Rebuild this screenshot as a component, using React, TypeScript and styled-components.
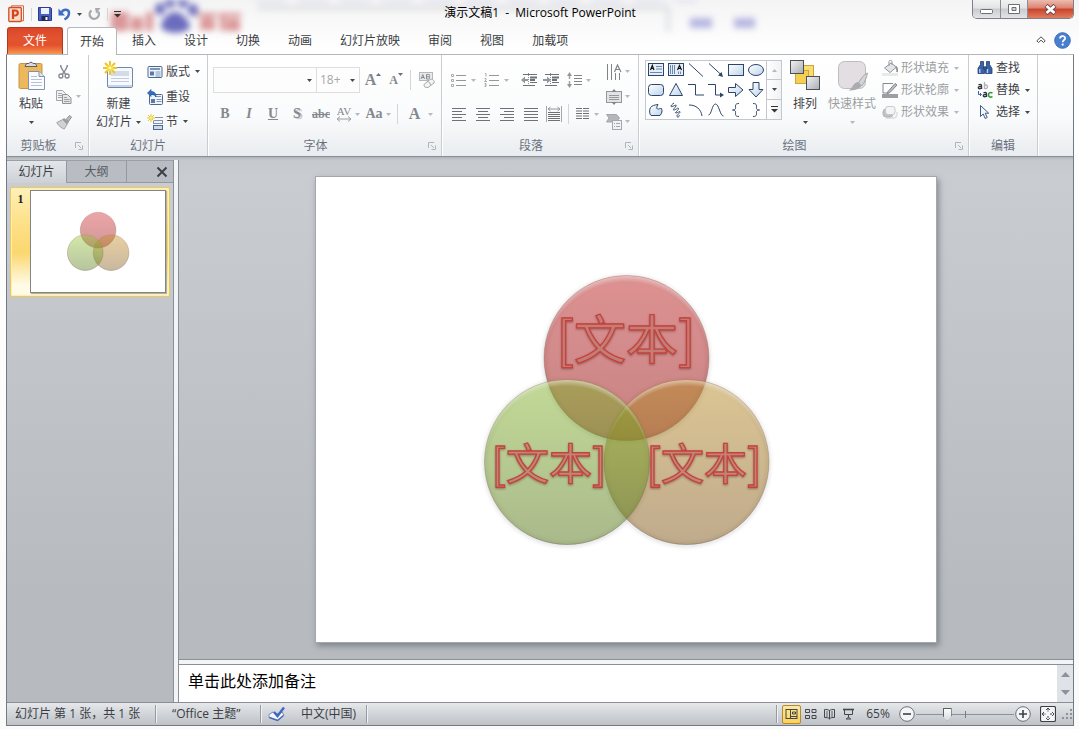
import React from "react";
import styled, { createGlobalStyle, css } from "styled-components";

const GlobalStyle = createGlobalStyle`
  *, *::before, *::after { box-sizing: border-box; }
  html, body { margin: 0; padding: 0; }
  body {
    font-family: "Open Sans", "Noto Sans CJK SC", sans-serif;
    font-size: 12px;
    line-height: 18px;
    color: #3c4046;
    background: #fbfbfb;
  }
  button, input, select, textarea { font: inherit; color: inherit; }
  button {
    margin: 0; padding: 0; border: 0; background: none;
    white-space: nowrap;
  }
  svg { display: block; flex: none; }
`;

/* ---------- window ---------- */

const Window = styled.div`
  min-height: 100vh;
  padding: 0 5px 3px 6px;
  display: flex;
  flex-direction: column;
  background: linear-gradient(#f4f4f5, #ffffff 50px, #fbfafa);
`;

const TitleBar = styled.header`
  position: relative;
  height: 27px;
  display: grid;
  grid-template-columns: 1fr auto 1fr;
  align-items: start;
`;

const GlassBackdrop = styled.svg`
  position: absolute;
  left: 100px;
  top: 0;
  filter: blur(3px);
`;

const QuickAccess = styled.div`
  position: relative;
  height: 28px;
  display: flex;
  align-items: center;
  gap: 6px;
  padding-left: 2px;
`;

const Title = styled.h1`
  position: relative;
  margin: 0;
  padding-top: 4px;
  font-size: 12px;
  font-weight: 400;
  color: #000;
  white-space: pre;
`;

const WindowControls = styled.div`
  position: relative;
  justify-self: end;
  display: flex;
  height: 19px;
  border: 1px solid #7d8086;
  border-top: 0;
  border-radius: 0 0 5px 5px;
  overflow: hidden;
`;

const ControlButton = styled.button<{ $close?: boolean }>`
  width: ${(p) => (p.$close ? 46 : 27)}px;
  display: flex;
  align-items: center;
  justify-content: center;
  background: ${(p) =>
    p.$close
      ? "linear-gradient(#ecbcb0, #dd8270 45%, #c8432b 50%, #e07c5f)"
      : "linear-gradient(#f2f2f3, #e2e3e5 45%, #c9cbcf 50%, #e3e4e7)"};
  & + & { border-left: 1px solid #8b8e94; }
`;

const TabRow = styled.nav`
  height: 27px;
  display: flex;
  align-items: flex-start;
  padding-left: 1px;
`;

const FileTab = styled.button`
  width: 56px;
  height: 27px;
  margin-right: 5px;
  border: 1px solid #b23a1c;
  border-bottom: 0;
  border-radius: 3px 3px 0 0;
  color: #fff;
  background: linear-gradient(#d9472a, #e4532f 40%, #e2502c 65%, #f0763f 85%, #f59a55);
`;

const RibbonTab = styled.button<{ $active?: boolean }>`
  height: 28px;
  padding: 0 12px;
  margin-right: 4px;
  color: #3b3e43;
  position: relative;
  ${(p) =>
    p.$active &&
    css`
      padding: 0 12px;
      border: 1px solid #b4b7bc;
      border-bottom: 0;
      border-radius: 3px 3px 0 0;
      background: #fff;
      margin-right: 3px;
      margin-left: -1px;
    `}
`;

const TabTools = styled.div`
  margin-left: auto;
  height: 26px;
  display: flex;
  align-items: center;
  gap: 8px;
  padding-right: 3px;
`;

const Frame = styled.div`
  flex: 1;
  display: flex;
  flex-direction: column;
  border: 1px solid #747a82;
  border-top-color: #b4b7bc;
`;

/* ---------- ribbon ---------- */

const Ribbon = styled.div`
  height: 102px;
  display: flex;
  border-bottom: 1px solid #8a8f97;
  background: linear-gradient(#ffffff, #fafbfc 60%, #e9ecf0);
`;

const GroupBox = styled.section<{ $width: number }>`
  flex: 0 0 ${(p) => p.$width}px;
  display: flex;
  flex-direction: column;
  border-right: 1px solid #c9ccd1;
  box-shadow: 1px 0 0 #ffffff;
`;

const GroupBody = styled.div<{ $left: number }>`
  flex: 1;
  display: flex;
  align-items: flex-start;
  padding-left: ${(p) => p.$left}px;
`;

const GroupFooter = styled.div`
  height: 20px;
  display: flex;
  align-items: center;
`;

const GroupLabel = styled.h2`
  flex: 1;
  margin: 0;
  font-size: 12px;
  font-weight: 400;
  text-align: center;
  color: #69717d;
`;

const Launcher = styled.button`
  width: 18px;
  display: flex;
  justify-content: center;
  color: #b0b4ba;
`;

const BigButton = styled.button<{ $width: number; $dim?: boolean }>`
  width: ${(p) => p.$width}px;
  padding-top: 4px;
  display: flex;
  flex-direction: column;
  align-items: center;
  color: ${(p) => (p.$dim ? "#9b9ea3" : "#3c4046")};
  & > svg:first-child { margin-bottom: 4px; }
`;

const BigLine = styled.span`
  height: 18px;
  display: flex;
  align-items: center;
  gap: 4px;
`;

const Stack = styled.div<{ $pitch: 22 | 25; $left?: number }>`
  display: flex;
  flex-direction: column;
  padding-top: ${(p) => (p.$pitch === 25 ? 4 : 2)}px;
  margin-left: ${(p) => p.$left ?? 4}px;
  & > button { height: ${(p) => p.$pitch}px; }
`;

const RowButton = styled.button<{ $dim?: boolean; $gap?: number }>`
  display: flex;
  align-items: center;
  gap: ${(p) => p.$gap ?? 3}px;
  color: ${(p) => (p.$dim ? "#9b9ea3" : "#3c4046")};
  & > span + svg { margin-left: 2px; }
`;

const ToolRows = styled.div`
  display: flex;
  flex-direction: column;
  gap: 8px;
  padding-top: 12px;
`;

const ToolRow = styled.div`
  height: 26px;
  display: flex;
  align-items: center;
`;

const ToolButton = styled.button<{ $width?: number; $gap?: number }>`
  width: ${(p) => p.$width ?? 24}px;
  height: 24px;
  display: flex;
  align-items: center;
  justify-content: center;
  gap: ${(p) => p.$gap ?? 3}px;
  color: #85888d;
`;

const Glyph = styled.span<{ $size?: number; $italic?: boolean; $underline?: boolean; $strike?: boolean; $shadow?: boolean }>`
  font-family: "Liberation Serif", serif;
  font-weight: 700;
  font-size: ${(p) => p.$size ?? 14}px;
  line-height: 18px;
  font-style: ${(p) => (p.$italic ? "italic" : "normal")};
  text-decoration: ${(p) => (p.$underline ? "underline" : p.$strike ? "line-through" : "none")};
  text-shadow: ${(p) => (p.$shadow ? "2px 1px 1px #b9bbbe" : "none")};
`;

const Divider = styled.span<{ $height?: number; $margin?: number }>`
  width: 1px;
  height: ${(p) => p.$height ?? 20}px;
  margin: 0 ${(p) => p.$margin ?? 4}px;
  background: #d3d5d9;
`;

const Combo = styled.label<{ $width: number }>`
  width: ${(p) => p.$width}px;
  height: 26px;
  display: grid;
  align-items: center;
  border: 1px solid #dcdee1;
  background: #fdfdfd;
  & + & { border-left: 0; }
  & > * { grid-area: 1 / 1; }
  & > svg { justify-self: end; margin-right: 4px; pointer-events: none; color: #55585d; }
  & > select {
    appearance: none;
    width: 100%;
    height: 24px;
    padding: 0 3px;
    border: 0;
    outline: 0;
    background: transparent;
    color: #a6a8ab;
  }
`;

const Gallery = styled.div`
  margin: 5px 4px 0 0;
  display: flex;
  height: 60px;
  box-shadow: inset 0 0 0 1px #c4c8ce;
  background: #fff;
`;

const GalleryGrid = styled.div`
  display: grid;
  grid-template-columns: repeat(6, 20px);
  padding-left: 1px;
  & > button {
    height: 20px;
    display: flex;
    align-items: center;
    justify-content: center;
  }
`;

const GalleryScroll = styled.div`
  width: 16px;
  display: flex;
  flex-direction: column;
  & > button {
    height: 20px;
    display: flex;
    align-items: center;
    justify-content: center;
    border: 1px solid #c4c8ce;
    background: linear-gradient(90deg, #ffffff, #f0f2f4);
    color: #55585d;
  }
  & > button + button { border-top: 0; }
  & > button:first-child { color: #b4b7bb; }
`;

/* ---------- workspace ---------- */

const Workspace = styled.div`
  flex: 1;
  display: grid;
  grid-template-columns: 167px 4px minmax(0, 1fr);
  padding-top: 3px;
  background: linear-gradient(#aeb3b9, #c5c9ce 3px, #c9ccd1 20px, #b7bbc0 440px, #b7bbc0);
`;

const Splitter = styled.div`
  background: #f2f4f6;
`;

const SidePanel = styled.aside`
  border-right: 1px solid #8b9097;
`;

const PanelTabs = styled.div`
  height: 23px;
  display: flex;
  border-top: 1px solid #9aa0a7;
`;

const PanelTab = styled.button<{ $active?: boolean }>`
  width: 60px;
  border-right: 1px solid #9399a0;
  ${(p) =>
    p.$active
      ? css`padding-bottom: 1px; background: linear-gradient(#e3e6e9, #cdd1d6); color: #3c4046;`
      : css`background: #b9bdc3; color: #565b62; border-bottom: 1px solid #9399a0;`}
`;

const PanelClose = styled.button`
  flex: 1;
  display: flex;
  align-items: center;
  justify-content: flex-end;
  padding-right: 5px;
  color: #3c4046;
  background: #b9bdc3;
  border-bottom: 1px solid #9399a0;
`;

const SlideThumb = styled.button`
  margin: 4px 4px 0 3px;
  width: 160px;
  padding: 2px 3px 3px 0;
  display: flex;
  align-items: flex-start;
  border: 1px solid #e9c964;
  border-radius: 2px;
  background: linear-gradient(#fff0b8, #fddf85 35%, #fbd76f 60%, #fffbe6 90%);
  box-shadow: inset 0 0 0 1px #fdeeb4;
`;

const ThumbNumber = styled.span`
  width: 19px;
  font-family: "Liberation Serif", serif;
  font-weight: 700;
  text-align: center;
  color: #222;
`;

const ThumbPaper = styled.span`
  flex: 1;
  border: 1px solid #80858c;
  background: #fff;
  box-shadow: 1px 1px 1px #b9b08c;
  & > svg { width: 100%; height: auto; }
`;

const MainColumn = styled.main`
  display: flex;
  flex-direction: column;
  border-left: 1px solid #8b9097;
`;

const SlidePane = styled.div`
  flex: 1;
  padding: 17px 137px 17px 137px;
  border-bottom: 1px solid #8b9097;
`;

const Slide = styled.div`
  aspect-ratio: 4 / 3;
  background: #fff;
  box-shadow: 0 0 0 1px #a4a8ae, 2px 3px 6px 1px rgba(70, 75, 82, 0.5);
  & > svg { width: 100%; height: 100%; }
`;

const HorizontalSplitter = styled.div`
  height: 4px;
  background: #f2f4f6;
`;

const Notes = styled.div`
  height: 38px;
  display: flex;
  border-top: 1px solid #8b9097;
  background: #fff;
`;

const NotesInput = styled.textarea`
  flex: 1;
  min-width: 0;
  padding: 4px 9px;
  border: 0;
  outline: 0;
  resize: none;
  overflow: hidden;
  font-size: 16px;
  line-height: 24px;
  color: #000;
  background: transparent;
`;

const NotesScroll = styled.div`
  width: 16px;
  display: flex;
  flex-direction: column;
  background: #dfe3e8;
  color: #8a929c;
  & > button {
    flex: 1;
    display: flex;
    align-items: center;
    justify-content: center;
  }
`;

/* ---------- status bar ---------- */

const StatusBar = styled.footer`
  height: 23px;
  display: flex;
  align-items: center;
  border-top: 1px solid #8a8f97;
  background: linear-gradient(#e6e8ea, #d3d6da 45%, #bec2c7);
  color: #3a3e44;
`;

const StatusItem = styled.button<{ $width: number; $left: number }>`
  width: ${(p) => p.$width}px;
  height: 20px;
  display: flex;
  align-items: center;
  padding-left: ${(p) => p.$left}px;
`;

const StatusDivider = styled.span`
  width: 2px;
  height: 18px;
  border-left: 1px solid #969ba2;
  border-right: 1px solid #f0f1f3;
`;

const StatusRight = styled.div`
  margin-left: auto;
  height: 22px;
  display: flex;
  align-items: center;
`;

const ViewButton = styled.button<{ $active?: boolean }>`
  width: 19px;
  height: 19px;
  display: flex;
  align-items: center;
  justify-content: center;
  color: #43474d;
  ${(p) =>
    p.$active &&
    css`
      margin-left: 4px;
      border: 1px solid #b5892c;
      border-radius: 2px;
      background: linear-gradient(#fde9a0, #fbd159);
    `}
`;

const FitButton = styled(ViewButton)`
  margin: 0 5px 0 6px;
`;

const ZoomValue = styled.button`
  width: 40px;
  height: 20px;
  text-align: center;
`;

const ZoomSlider = styled.input`
  appearance: none;
  width: 98px;
  height: 16px;
  margin: 0;
  background:
    linear-gradient(#767b82, #767b82) 49px 50% / 1px 7px no-repeat,
    linear-gradient(#8d9299, #8d9299) 0 50% / 100% 1px no-repeat;
  &::-webkit-slider-thumb {
    appearance: none;
    width: 9px;
    height: 13px;
    border: 0;
    background: linear-gradient(#ffffff, #d5d8dc);
    clip-path: polygon(0 0, 100% 0, 100% 65%, 50% 100%, 0 65%);
    box-shadow: inset 0 0 0 1px #5b6067;
  }
`;

const ZoomStep = styled.button`
  width: 18px;
  height: 20px;
  display: flex;
  align-items: center;
  justify-content: center;
`;

/* ---------- icons ---------- */

const Caret = ({ dim }: { dim?: boolean }) => (
  <svg width="5" height="3" viewBox="0 0 5 3">
    <path d="M0 0h5L2.500 3z" fill={dim ? "#b5b8bc" : "#45484d"} />
  </svg>
);

const LauncherIcon = () => (
  <svg width="8" height="8" viewBox="0 0 8 8" fill="none" stroke="currentColor">
    <path d="M.5 6V.5H6M3 3l3 3M7.500 3.500v4h-4" />
  </svg>
);

const AppIcon = () => (
  <svg width="17" height="18" viewBox="0 0 17 18">
    <path d="M3.500.8h12v15h-12z" fill="#fdf1ea" stroke="#d76a44" />
    <rect x=".8" y="2.500" width="12.500" height="14" rx="1" fill="#fbdccb" stroke="#cf4f26" strokeWidth="1.300" />
    <path d="M5 14V5.500h2.300a2.400 2.400 0 0 1 0 5H5.500" fill="none" stroke="#d6431a" strokeWidth="2.200" />
  </svg>
);

const SaveIcon = () => (
  <svg width="14" height="14" viewBox="0 0 14 14">
    <path d="M.5.5h12l1 1v12H.5z" fill="#4a5fc1" stroke="#2c3a8f" />
    <rect x="3" y="1" width="8" height="6" fill="#eef2fb" />
    <rect x="3.500" y="9" width="7" height="5" fill="#1e2861" />
    <rect x="7.500" y="10" width="2" height="3" fill="#fff" />
  </svg>
);

const UndoIcon = () => (
  <svg width="13" height="14" viewBox="0 0 13 14" fill="none">
    <path d="M3.500 5.500c2-4 7.500-3.500 7.500.5 0 3-2 5-4.500 6.500" stroke="#3d6cc6" strokeWidth="2.500" />
    <path d="M.5 1.500v7h6.500z" fill="#3d6cc6" />
  </svg>
);

const RedoIcon = () => (
  <svg width="13" height="14" viewBox="0 0 13 14" fill="none">
    <path d="M3.500 3.500a4.600 4.600 0 1 0 6.500 1" stroke="#a6a9ad" strokeWidth="2.400" />
    <path d="M7 1h5.500L8 6.500z" fill="#a6a9ad" />
  </svg>
);

const CustomizeIcon = () => (
  <svg width="7" height="7" viewBox="0 0 7 7">
    <path d="M0 .5h7" stroke="#333" />
    <path d="M0 3h7L3.500 6.500z" fill="#333" />
  </svg>
);

const PasteIcon = () => (
  <svg width="32" height="32" viewBox="0 0 32 32">
    <rect x="4" y="4.500" width="23" height="25" rx="1.500" fill="#edb85c" stroke="#c39443" />
    <path d="M10 7.500h12l-1.500-3h-2.500a2.200 2.200 0 0 0-4 0h-2.500z" fill="#d8dadd" stroke="#5d6168" />
    <path d="M13.500 12.500h10.500l5.500 5v13h-16z" fill="#fafcff" stroke="#8492ad" />
    <path d="M24 12.500v5h5.500" fill="#dfe6f1" stroke="#8492ad" />
    <path d="M16 17.500h6M16 20.500h11M16 23.500h11M16 26.500h11" stroke="#b5c0d4" />
  </svg>
);

const CutIcon = () => (
  <svg width="16" height="16" viewBox="0 0 16 16" fill="none" stroke="#85888d">
    <path d="M4.500 1c.5 3 2.500 6 5 9M11.500 1c-.5 3-2.500 6-5 9" strokeWidth="1.500" />
    <circle cx="4.900" cy="12" r="2" strokeWidth="1.300" />
    <circle cx="11.100" cy="12" r="2" strokeWidth="1.300" />
  </svg>
);

const CopyIcon = () => (
  <svg width="16" height="16" viewBox="0 0 16 16" stroke="#a2a5aa" fill="#f1f2f3">
    <path d="M.5 1.500h6l3 3v7h-9z" />
    <path d="M2 4.500h4M2 6.500h5M2 8.500h5" />
    <path d="M6.500 5.500h5l3.500 3.500v5.500H6.500z" fill="#e6e7e9" stroke="#8f9297" />
    <path d="M8 8.500h3M8 10.500h5.500M8 12.500h5.500" stroke="#9b9ea3" />
  </svg>
);

const BrushIcon = () => (
  <svg width="16" height="16" viewBox="0 0 16 16">
    <path d="M.8 8.500l6-3 4.500 4.500-3 5c-2-.5-6-3-7.500-6.500z" fill="#cfd1d4" stroke="#a2a5aa" />
    <path d="M6.500 5.500L8 4l5 4-2 2.500z" fill="#9a9da2" />
    <path d="M10 5.500l3.500-4 2 1.500-3 4.500z" fill="#b9bbbf" stroke="#8f9297" />
  </svg>
);

const Spark = ({ x, y, r }: { x: number; y: number; r: number }) => {
  const d = Math.round(r * 0.75);
  return (
    <g transform={`translate(${x} ${y})`} stroke="#ecc62a" strokeWidth={r > 5 ? 2 : 1}>
      <path d={`M0 ${-r}V${r}M${-r} 0H${r}M${-d} ${-d}L${d} ${d}M${-d} ${d}L${d} ${-d}`} />
      <circle r={r / 3} fill="#fffbd0" stroke="#f7dc4a" />
    </g>
  );
};

const NewSlideIcon = () => (
  <svg width="32" height="32" viewBox="0 0 32 32">
    <rect x="4.500" y="8.500" width="25" height="20" rx="1.500" fill="#f6f9fd" stroke="#7387a8" />
    <path d="M5 26h24v2H5z" fill="#c3d3e8" />
    <rect x="8" y="12" width="18" height="5" fill="#d3dbe7" />
    <path d="M8 19.500h18M8 22.500h18" stroke="#c3ccda" />
    <Spark x={7} y={9} r={7} />
  </svg>
);

const LayoutIcon = () => (
  <svg width="16" height="16" viewBox="0 0 16 16">
    <rect x="1" y="2.500" width="14" height="11" rx="1" fill="#eef4fb" stroke="#4f688f" />
    <path d="M3 5h10" stroke="#7e95b8" strokeWidth="2" />
    <rect x="3" y="7.500" width="4" height="4" fill="#5c7aa8" />
    <path d="M8.500 8h5M8.500 10h5M8.500 12h5" stroke="#8198ba" />
  </svg>
);

const ResetIcon = () => (
  <svg width="16" height="16" viewBox="0 0 16 16">
    <rect x="2.500" y="5.500" width="13" height="10" rx="1" fill="#eef4fb" stroke="#4f688f" />
    <path d="M8 7.500h6" stroke="#7e95b8" />
    <rect x="4" y="10" width="4" height="4" fill="#5c7aa8" />
    <path d="M9.500 10.500h5M9.500 12.500h5" stroke="#8198ba" />
    <path d="M.5 4L4 .5v2c3.500 0 5 1.500 5 5.500-1-2-2.500-2.500-5-2.500v2z" fill="#2f6fc4" stroke="#1f4f94" strokeWidth=".6" />
  </svg>
);

const SectionIcon = () => (
  <svg width="16" height="16" viewBox="0 0 16 16">
    <path d="M8 3.500h8" stroke="#8b9099" />
    <rect x="6.500" y="6.500" width="9" height="3" fill="#eef4fb" stroke="#7e91b1" />
    <rect x="6.500" y="11.500" width="9" height="4" fill="#c9d9ee" stroke="#4f688f" />
    <Spark x={4} y={4} r={4} />
  </svg>
);

const SizeArrow = ({ up }: { up?: boolean }) => (
  <svg width="5" height="16" viewBox="0 0 5 16">
    <path d={up ? "M0 4L2.500 1 5 4z" : "M0 1h5L2.500 4z"} fill="#6e7176" />
  </svg>
);

const ClearIcon = () => (
  <svg width="18" height="18" viewBox="0 0 18 18">
    <rect x="1.500" y="1.500" width="13" height="8" fill="#e9eaec" stroke="#b5b7bb" />
    <path d="M3 8l1.800-4.500L6.500 8M3.800 6.500h2.200M8.500 3.500v4.500h2.200a1.200 1.200 0 0 0 0-2.300H9M8.500 3.500h2.200a1.100 1.100 0 0 1 0 2.200" fill="none" stroke="#7e8186" strokeWidth=".9" />
    <path d="M6 13.500l6-5c2-1 5 1 4 3.500l-6 4.500c-2.500.5-4.500-1-4-3z" fill="#f4f4f5" stroke="#a4a7ab" />
    <path d="M9.500 10.500c2 .5 3 2 3 4" fill="none" stroke="#a4a7ab" />
  </svg>
);

const SpacingIcon = () => (
  <svg width="16" height="6" viewBox="0 0 16 6" fill="none" stroke="#9b9ea3">
    <path d="M1 3h14M4 .5L1 3l3 2.500M12 .5L15 3l-3 2.500" />
  </svg>
);

const SpacingGlyph = styled.span`
  display: flex;
  flex-direction: column;
  align-items: center;
  font-family: "Liberation Serif", serif;
  font-size: 11px;
  line-height: 9px;
`;

const Bullets = ({ numbered }: { numbered?: boolean }) => (
  <svg width="15" height="14" viewBox="0 0 15 14" fill="none" stroke="#94979c">
    <path d="M5 2.500h10M5 7.500h10M5 12.500h10" />
    {numbered ? (
      <path d="M1 .5h1v3M.5 5.500H2v1.500L.5 8.500H3M.5 10.500H2v3H.5M.8 12H2" strokeWidth=".8" />
    ) : (
      <path d="M.5 1.500h2v2h-2zM.5 6.500h2v2h-2zM.5 11.500h2v2h-2z" strokeWidth=".8" />
    )}
  </svg>
);

const IndentIcon = ({ inward }: { inward?: boolean }) => (
  <svg width="16" height="14" viewBox="0 0 16 14" fill="none" stroke="#6e7176">
    <path d="M2 1.500h14M9 9.500h7M2 12.500h12" />
    <path d="M9 4.500h7M9 7h5" strokeWidth="1.800" />
    <path d={inward ? "M0 7h5" : "M2 7h5"} strokeWidth="2" stroke="#94979c" />
    <path d={inward ? "M4 3.500v7L8 7z" : "M4 3.500v7L0 7z"} fill="#94979c" stroke="none" />
    <path d="M7.500 0v14" strokeDasharray="1 1" strokeWidth=".8" />
  </svg>
);

const LineSpacingIcon = () => (
  <svg width="16" height="16" viewBox="0 0 16 16" fill="none" stroke="#808388">
    <path d="M7 3.500h8M7 6.500h8M7 9.500h8M7 12.500h8" />
    <path d="M2.500 2v12" stroke="#a2a5aa" strokeWidth="1.500" strokeDasharray="5 2 5" />
    <path d="M0 4l2.500-4L5 4zM0 12l2.500 4L5 12z" fill="#94979c" stroke="none" />
  </svg>
);

const alignLines = {
  left: "M0 .5h14M0 3.500h10M0 6.500h14M0 9.500h10M0 12.500h14",
  center: "M0 .5h14M2 3.500h10M0 6.500h14M2 9.500h10M0 12.500h14",
  right: "M0 .5h14M4 3.500h10M0 6.500h14M4 9.500h10M0 12.500h14",
  justify: "M0 .5h14M0 3.500h14M0 6.500h14M0 9.500h14M0 12.500h14",
};

const AlignIcon = ({ kind }: { kind: keyof typeof alignLines }) => (
  <svg width="14" height="13" viewBox="0 0 14 13" stroke="#6e7176">
    <path d={alignLines[kind]} />
  </svg>
);

const DistributeIcon = () => (
  <svg width="16" height="16" viewBox="0 0 16 16" fill="none" stroke="#6e7176">
    <path d="M.5 0v16M15.500 0v16" stroke="#a4a7ab" />
    <path d="M2 6.500h12M2 8.500h12M2 10.500h12M2 12.500h12M2 14.500h12" />
    <path d="M2 3h12M4.500 1L2 3l2.500 2M11.500 1L14 3l-2.500 2" stroke="#94979c" />
  </svg>
);

const ColumnsIcon = () => (
  <svg width="13" height="12" viewBox="0 0 13 12" stroke="#6e7176">
    <path d="M0 .5h6M0 3h6M0 5.500h6M0 8h6M0 10.500h6M7 .5h6M7 3h6M7 5.500h6M7 8h6M7 10.500h6" />
  </svg>
);

const TextDirectionIcon = () => (
  <svg width="16" height="16" viewBox="0 0 16 16" fill="none" stroke="#808388">
    <path d="M1.500 0v16M5.500 0v16M9.500 9v7M13.500 9v7" />
    <path d="M8.500 8l3-7 3.500 7M9.500 5.500h4" strokeWidth="1.200" />
  </svg>
);

const TextAlignIcon = () => (
  <svg width="16" height="16" viewBox="0 0 16 16" fill="none" stroke="#94979c">
    <rect x=".5" y="2.500" width="15" height="11" fill="#e4e2e5" />
    <path d="M3 6.500h10M3 8.500h10M3 10.500h10" />
    <path d="M5.500 3L8 0l2.500 3zM5.500 13L8 16l2.500-3z" fill="#808388" stroke="none" />
  </svg>
);

const SmartArtIcon = () => (
  <svg width="16" height="16" viewBox="0 0 16 16" fill="none" stroke="#a4a7ab">
    <path d="M.5.5h10l3 3.500-3 4h-10L3 4z" fill="#b4b6ba" />
    <rect x="6.500" y="6.500" width="9" height="9" fill="#f1f2f3" />
    <path d="M8 9.500h1M10 9.500h4M8 12.500h1M10 12.500h4" />
  </svg>
);

const navy = "#2d4668";

const shapes: { name: string; art: React.ReactNode }[] = [
  { name: "文本框", art: <><rect x=".5" y="1.500" width="15" height="12" fill="#e4edf8" /><path d="M2.500 8l1.800-4.500L6 8M3.200 6.500h2.200" strokeWidth="1.200" stroke="#111" /><path d="M8 4.500h6M8 7h6M2 10.500h12" strokeWidth=".9" stroke="#5e7ba3" /></> },
  { name: "垂直文本框", art: <><rect x=".5" y="1.500" width="15" height="12" fill="#e4edf8" /><path d="M9.500 8l2-4.500 2 4.500M10.200 6.500h2.600" strokeWidth="1.200" stroke="#111" /><path d="M2.500 3v9M4.500 3v9M6.500 3v9M10.500 9.500V12M12.500 9.500V12" strokeWidth=".9" stroke="#5e7ba3" /></> },
  { name: "直线", art: <path d="M1 1.500l14 13" /> },
  { name: "箭头", art: <><path d="M1 1.500l13 12" /><path d="M15 15l-5-1.500L13.500 10z" fill={navy} stroke="none" /></> },
  { name: "矩形", art: <rect x=".5" y="2.500" width="15" height="11" fill="url(#pale)" /> },
  { name: "椭圆", art: <ellipse cx="8" cy="8" rx="7.500" ry="5.500" fill="url(#pale)" /> },
  { name: "圆角矩形", art: <rect x=".5" y="2.500" width="15" height="11" rx="3" fill="url(#pale)" /> },
  { name: "三角形", art: <path d="M8 1.500l6.500 12h-13z" fill="url(#pale)" /> },
  { name: "肘形连接符", art: <path d="M0 2.500h7.500v10.500H16" /> },
  { name: "肘形箭头", art: <><path d="M0 2.500h7.500v10.500H14" /><path d="M12 10.500v5l4-2.500z" fill={navy} stroke="none" /></> },
  { name: "右箭头", art: <path d="M.5 5.500h7v-4L15 8l-7.500 6.500v-4h-7z" fill="url(#pale)" /> },
  { name: "下箭头", art: <path d="M5 .5h6v7h4L8 15 1 7.500h4z" fill="url(#pale)" /> },
  { name: "任意多边形", art: <path d="M3 13.500C1.500 12.500 1 8 2.500 5.500c1.500-2 4-2.500 7.500-3-1 2-2 3.500-.5 4.500 1 .5 2.500-1 4-.5 1 2 .5 5-1.500 7z" fill="url(#pale)" /> },
  { name: "自由曲线", art: <path d="M6 1C3 3 2 5 4 4.500S9 2 8 4 4 8 6 8s4-3 4.500-1.500S6 11 8 11s4-2.500 4-1-4 3-3 4.500 3-.5 2-1.500" /> },
  { name: "弧形", art: <path d="M1 3c7 0 12 4 13 11" /> },
  { name: "曲线", art: <path d="M.5 13c3 0 3.500-11 7-11s4.500 12 8 12" /> },
  { name: "左大括号", art: <path d="M11 1.500c-5 0-3 3-3.500 5-.3 1-1.500 1.500-3 1.500 1.500 0 2.700.5 3 1.500.5 2-1.500 5 3.500 5" /> },
  { name: "右大括号", art: <path d="M5 1.500c5 0 3 3 3.500 5 .3 1 1.500 1.500 3 1.500-1.500 0-2.700.5-3 1.500-.5 2 1.500 5-3.500 5" /> },
];

const ShapeIcon = ({ children }: { children: React.ReactNode }) => (
  <svg width="16" height="16" viewBox="0 0 16 16" fill="none" stroke={navy}>
    {children}
  </svg>
);

const SharedGradients = styled.svg`
  position: absolute;
`;

const ArrangeIcon = () => (
  <svg width="32" height="32" viewBox="0 0 32 32">
    <rect x="11.500" y="6.500" width="13" height="13" fill="#fbdc6c" stroke="#c7a53f" />
    <rect x="6.500" y="11.500" width="13" height="13" fill="#f6cf52" stroke="#c7a53f" />
    <rect x="1.500" y="1.500" width="13" height="13" fill="url(#steel)" stroke="#4b4f56" />
    <rect x="17.500" y="17.500" width="13" height="13" fill="url(#steel)" stroke="#4b4f56" />
  </svg>
);

const QuickStyleIcon = () => (
  <svg width="32" height="32" viewBox="0 0 32 32">
    <rect x="2.500" y="2.500" width="27" height="27" rx="6" fill="#e2dee2" stroke="#bfbcc0" />
    <path d="M31.500 14c-4 2-7 6-9 10l3 3c3-3 5-8 6-13z" fill="#d3d4d6" stroke="#a4a7ab" />
    <path d="M22 23l3.500 3.500c-2 4-7 5-13 5 4-1.500 4-7.500 9.500-8.500z" fill="#a9acb0" />
  </svg>
);

const FillIcon = () => (
  <svg width="16" height="16" viewBox="0 0 16 16" fill="none" stroke="#94979c">
    <path d="M2.500 8L9 3l5.500 4L8 12.500z" fill="#e4e5e7" />
    <path d="M7 6V1.500c0-1.500 3-1.500 3 0V5" />
    <path d="M13.500 6.500c2 1.500 2 3.500 1.500 5.500" strokeWidth="2" />
    <rect x="0" y="13" width="16" height="3" fill="#e9e9ea" stroke="none" />
  </svg>
);

const OutlineIcon = () => (
  <svg width="16" height="16" viewBox="0 0 16 16" fill="none" stroke="#85888d">
    <path d="M11 1.500H1v9.500h6" />
    <path d="M6 9.500l7-8 2 1.500-7 7.500-3 1z" fill="#b9bbbf" />
    <rect x="0" y="12" width="16" height="4" fill="#9b9ea3" stroke="none" />
  </svg>
);

const EffectIcon = () => (
  <svg width="16" height="16" viewBox="0 0 16 16">
    <path d="M4 14h8c3 0 3-4 3-6" stroke="#e2e3e5" strokeWidth="2" fill="none" />
    <rect x="1" y="5" width="10" height="8" rx="3" fill="#bfc1c5" stroke="#b3b5b9" />
    <rect x="3.500" y="2.500" width="9.500" height="8" rx="2.500" fill="#f4f4f5" stroke="#c6c8cb" />
  </svg>
);

const FindIcon = () => (
  <svg width="16" height="16" viewBox="0 0 16 16" fill="#3a62a8" stroke="#1e3c74" strokeWidth=".8">
    <path d="M3.500 1.500h3v4l1 2v6H1v-5l2.500-4z" />
    <path d="M9.500 1.500h3v3l2.500 4v5H8.500v-6l1-2z" />
    <path d="M6.500 7h3v2h-3z" />
    <path d="M2.800 9v4M10.500 9v4" stroke="#b9d0f0" strokeWidth="1.300" />
  </svg>
);

const ReplaceIcon = () => (
  <svg width="16" height="16" viewBox="0 0 16 16" fill="none" strokeWidth="1.400">
    <path d="M1.500 2.800c2.500-1 3 0 3 1.200v3M4.500 4.500c-2-.2-3.200.3-3.200 1.300 0 1.300 2.700 1.300 3.200 0" stroke="#33373c" />
    <path d="M7.500 0v7M7.500 4c0-1.500 3-1.500 3 .8s-3 2.400-3 .9" stroke="#b0b3b8" />
    <path d="M6.500 10.800c2.500-1 3 0 3 1.200v3M9.500 12.500c-2-.2-3.200.3-3.200 1.300 0 1.300 2.700 1.300 3.200 0" stroke="#33373c" />
    <path d="M15.500 11c-2.500-1.200-4 .2-4 1.900s1.500 2.900 4 1.700" stroke="#2c9a3c" strokeWidth="1.600" />
    <path d="M1.500 9v3.500H4M3 11l1.500 1.500L3 14" stroke="#3a62a8" strokeWidth="1" />
  </svg>
);

const SelectIcon = () => (
  <svg width="16" height="16" viewBox="0 0 16 16">
    <path d="M3.500 1.500v11l2.700-2.500 2 4.500 2-1-2-4.300h3.500z" fill="#f4f8fd" stroke="#3e5a87" />
  </svg>
);

const HelpIcon = () => (
  <svg width="17" height="17" viewBox="0 0 17 17">
    <circle cx="8.500" cy="8.500" r="7.800" fill="#4a7fd0" stroke="#3b6cb8" />
    <path d="M6 6.500c0-3.200 5.200-3.200 5.200-.3 0 1.800-2.500 1.900-2.500 4" fill="none" stroke="#fff" strokeWidth="1.700" />
    <circle cx="8.700" cy="12.600" r="1.100" fill="#fff" />
  </svg>
);

const ProofIcon = () => (
  <svg width="18" height="16" viewBox="0 0 18 16">
    <path d="M1 8.500l4-2.500 4 2 5-2 2 3-6 5.500-9-3z" fill="#f4f8fd" stroke="#6f8cc0" />
    <path d="M1.500 11.500l8 3 6-5" fill="none" stroke="#4a6cb0" strokeWidth="1.500" />
    <path d="M6 6l3.500 4L16 1.500" fill="none" stroke="#4468c0" strokeWidth="2.400" />
  </svg>
);

const viewIcons: Record<string, React.ReactNode> = {
  普通视图: <><rect x="1" y="1.500" width="11" height="9" /><path d="M5.500 1.500v9M7.500 4h3v2h-3zM5.500 8.500H12" /></>,
  幻灯片浏览: <path d="M1.500 1.500h4v3h-4zM8 1.500h4v3H8zM1.500 7.500h4v3h-4zM8 7.500h4v3H8z" />,
  阅读视图: <><path d="M6.500 2.500C5 1.500 3 1.500 1.500 1.500v8c2 0 4 0 5 1.500 1-1.500 3-1.500 5-1.500v-8c-2 0-3.500 0-5 1zM6.500 2.500V11" /><path d="M3 4h2M3 6h2M8 4h2M8 6h2M3 8h2M8 8h2" strokeWidth=".8" /></>,
  幻灯片放映: <><path d="M1 1.500h11" strokeWidth="1.600" /><path d="M2.500 2v4.500h8V2M6.500 6.500v3M4 11h5M6.500 9l-2 2M6.500 9l2 2" /></>,
};

const ZoomGlyph = ({ plus }: { plus?: boolean }) => (
  <svg width="16" height="16" viewBox="0 0 16 16">
    <circle cx="8" cy="8" r="7.300" fill="#f4f5f6" stroke="#6e7278" />
    <path d={plus ? "M4 8h8M8 4v8" : "M4 8h8"} stroke="#3c4046" strokeWidth="1.600" />
  </svg>
);

const FitIcon = () => (
  <svg width="16" height="16" viewBox="0 0 16 16" fill="none" stroke="#3c4046">
    <rect x=".5" y=".5" width="15" height="15" rx="1.500" fill="#f4f5f6" strokeWidth="1.200" />
    <path d="M8 2.500v3.500M8 10v3.500M2.500 8H6M10 8h3.500" strokeDasharray="2 1" />
    <path d="M6 4l2-2 2 2M6 12l2 2 2-2M4 6L2 8l2 2M12 6l2 2-2 2" strokeWidth=".9" />
  </svg>
);

const GripIcon = () => (
  <svg width="11" height="11" viewBox="0 0 11 11" fill="#8d9299">
    <path d="M8 0h2v2H8zM8 4h2v2H8zM8 8h2v2H8zM4 4h2v2H4zM4 8h2v2H4zM0 8h2v2H0z" />
  </svg>
);

/* ---------- slide artwork ---------- */

const WordArt = styled.text`
  font-family: "Noto Sans CJK SC", sans-serif;
  font-weight: 400;
  text-anchor: middle;
  fill: rgba(210, 136, 124, 0.7);
  stroke: #c4423f;
  stroke-width: 1.3px;
  filter: drop-shadow(0 1px 1px rgba(90, 40, 30, 0.5));
`;

const circles = [
  { id: "red", cx: 310.5, cy: 181, top: "#bd2424", bottom: "#8e0808" },
  { id: "tan", cx: 370.5, cy: 285, top: "#b98c28", bottom: "#80561a" },
  { id: "green", cx: 251, cy: 285, top: "#86b42e", bottom: "#557418" },
];

const thumbColors: Record<string, string> = { red: "#d2282c", tan: "#c88c1e", green: "#96c832" };

const Venn = ({ id, small }: { id: string; small?: boolean }) => (
  <svg viewBox="0 0 620 465" role="img" aria-label="基本维恩图">
    <defs>
      {circles.map((c) => (
        <linearGradient key={c.id} id={`${id}-${c.id}`} x1="0" y1="0" x2="0" y2="1">
          <stop offset="0" stopColor={small ? thumbColors[c.id] : c.top} />
          <stop offset="1" stopColor={c.bottom} />
        </linearGradient>
      ))}
      <radialGradient id={`${id}-bevel`} cx=".5" cy=".54" r=".54">
        <stop offset=".93" stopColor="#fff" stopOpacity="0" />
        <stop offset="1" stopColor="#fff" stopOpacity=".5" />
      </radialGradient>
      <linearGradient id={`${id}-rim`} x1="0" y1="0" x2="0" y2="1">
        <stop offset="0" stopColor="#b08070" stopOpacity=".35" />
        <stop offset="1" stopColor="#605848" stopOpacity=".4" />
      </linearGradient>
      <filter id={`${id}-shade`} x="-10%" y="-10%" width="120%" height="125%">
        <feGaussianBlur stdDeviation="2" />
      </filter>
    </defs>
    {!small &&
      circles.map((c) => (
        <circle key={c.id} cx={c.cx} cy={c.cy + 1} r="82" fill="none" stroke="#000" strokeOpacity=".22" strokeWidth="2" filter={`url(#${id}-shade)`} />
      ))}
    {circles.map((c) => (
      <g key={c.id}>
        <circle cx={c.cx} cy={c.cy} r="82.500" fill={`url(#${id}-${c.id})`} fillOpacity={small ? 0.42 : 0.5} stroke={`url(#${id}-rim)`} strokeWidth={small ? 4 : 1} />
        {!small && <circle cx={c.cx} cy={c.cy} r="82" fill={`url(#${id}-bevel)`} />}
      </g>
    ))}
    {!small && (
      <>
        <WordArt x="310" y="182" fontSize="52">[文本]</WordArt>
        <WordArt x="233" y="303" fontSize="43">[文本]</WordArt>
        <WordArt x="388" y="303" fontSize="43">[文本]</WordArt>
      </>
    )}
  </svg>
);

/* ---------- page ---------- */

type GroupProps = { label: string; width: number; left: number; launcher?: boolean; children: React.ReactNode };

const Group = ({ label, width, left, launcher, children }: GroupProps) => (
  <GroupBox $width={width}>
    <GroupBody $left={left}>{children}</GroupBody>
    <GroupFooter>
      <GroupLabel>{label}</GroupLabel>
      {launcher && (
        <Launcher aria-label={`${label}选项`}>
          <LauncherIcon />
        </Launcher>
      )}
    </GroupFooter>
  </GroupBox>
);

const tabs = ["开始", "插入", "设计", "切换", "动画", "幻灯片放映", "审阅", "视图", "加载项"];

export default function App() {
  return (
    <Window>
      <GlobalStyle />
      <SharedGradients width="0" height="0" aria-hidden="true">
        <defs>
          <linearGradient id="pale" x1="0" y1="0" x2="1" y2="1">
            <stop offset="0" stopColor="#ffffff" />
            <stop offset="1" stopColor="#bcd4ec" />
          </linearGradient>
          <linearGradient id="steel" x1="0" y1="0" x2="1" y2="1">
            <stop offset="0" stopColor="#f2f3f4" />
            <stop offset="1" stopColor="#a9acb1" />
          </linearGradient>
        </defs>
      </SharedGradients>

      <TitleBar>
        <GlassBackdrop width="680" height="36" viewBox="0 0 680 36" aria-hidden="true">
          <g fill="#c85a5c" fillOpacity=".62">
            <path d="M5 12h14c6 0 6 7 1 9 6 2 4 10-2 10H5z" />
            <path d="M25 17h12v14H25zM40 12h7v19h-7z" />
            <path d="M91 13h20v4H91zM94 19h15v11H94zM99 15h5v8h-5z" />
            <path d="M113 13h22v4h-22zM114 17h5v14h-5zM120 19h14v12h-14z" />
          </g>
          <g fill="#3c3ca8" fillOpacity=".75">
            <ellipse cx="54" cy="9" rx="5" ry="6" />
            <ellipse cx="64" cy="2" rx="5" ry="6" />
            <ellipse cx="77" cy="2" rx="5" ry="6" />
            <ellipse cx="87" cy="10" rx="5" ry="6" />
            <path d="M69 12c6 0 14 8 15 14 0 9-29 9-29 0 0-6 8-14 14-14z" fillOpacity=".75" />
          </g>
          <path d="M152 8h410v24" fill="none" stroke="#cfd0d6" strokeWidth="4" strokeOpacity=".6" />
          <path d="M150 0h440" stroke="#c6c6ea" strokeWidth="3" strokeDasharray="30 12" />
          <rect x="584" y="18" width="22" height="10" fill="#9a9ad8" fillOpacity=".7" />
          <rect x="628" y="18" width="21" height="10" fill="#9a9ad8" fillOpacity=".7" />
        </GlassBackdrop>
        <QuickAccess>
          <AppIcon />
          <Divider $height={13} $margin={0} />
          <button aria-label="保存"><SaveIcon /></button>
          <button aria-label="撤消"><UndoIcon /></button>
          <button aria-label="撤消列表"><Caret /></button>
          <button aria-label="重复"><RedoIcon /></button>
          <Divider $height={13} $margin={0} />
          <button aria-label="自定义快速访问工具栏"><CustomizeIcon /></button>
        </QuickAccess>
        <Title>{"演示文稿1  -  Microsoft PowerPoint"}</Title>
        <WindowControls>
          <ControlButton aria-label="最小化">
            <svg width="13" height="9" viewBox="0 0 13 9"><rect x=".5" y="4.500" width="12" height="4" rx="1" fill="#fff" stroke="#6c6f76" /></svg>
          </ControlButton>
          <ControlButton aria-label="最大化">
            <svg width="12" height="10" viewBox="0 0 12 10"><path d="M.5.5h11v9H.5z" fill="#fff" stroke="#6c6f76" /><path d="M4 3.500h4v3H4z" fill="#d0d2d6" stroke="#6c6f76" /></svg>
          </ControlButton>
          <ControlButton $close aria-label="关闭">
            <svg width="13" height="11" viewBox="0 0 13 11" fill="none"><path d="M2 1.500l9 8M11 1.500l-9 8" stroke="#6b4a48" strokeWidth="4.500" /><path d="M2.500 2l8 7M10.500 2l-8 7" stroke="#fff" strokeWidth="2.800" /></svg>
          </ControlButton>
        </WindowControls>
      </TitleBar>

      <TabRow>
        <FileTab>文件</FileTab>
        {tabs.map((t, i) => (
          <RibbonTab key={t} $active={i === 0}>{t}</RibbonTab>
        ))}
        <TabTools>
          <button aria-label="功能区最小化">
            <svg width="10" height="8" viewBox="0 0 10 8" fill="#fff" stroke="#4a4e55"><path d="M5 .8l4.200 4-1.700 1.700L5 4.200 2.500 6.500.8 4.800z" /></svg>
          </button>
          <button aria-label="帮助"><HelpIcon /></button>
        </TabTools>
      </TabRow>

      <Frame>
        <Ribbon>
          <Group label="剪贴板" width={82} left={3} launcher>
            <BigButton $width={42}>
              <PasteIcon />
              <BigLine>粘贴</BigLine>
              <BigLine><Caret /></BigLine>
            </BigButton>
            <Stack $pitch={25}>
              <RowButton aria-label="剪切"><CutIcon /></RowButton>
              <RowButton aria-label="复制" $gap={4}><CopyIcon /><Caret dim /></RowButton>
              <RowButton aria-label="格式刷"><BrushIcon /></RowButton>
            </Stack>
          </Group>

          <Group label="幻灯片" width={119} left={4}>
            <BigButton $width={51}>
              <NewSlideIcon />
              <BigLine>新建</BigLine>
              <BigLine>幻灯片<Caret /></BigLine>
            </BigButton>
            <Stack $pitch={25} $left={3}>
              <RowButton><LayoutIcon /><span>版式</span><Caret /></RowButton>
              <RowButton><ResetIcon /><span>重设</span></RowButton>
              <RowButton><SectionIcon /><span>节</span><Caret /></RowButton>
            </Stack>
          </Group>

          <Group label="字体" width={234} left={5} launcher>
            <ToolRows>
              <ToolRow>
                <Combo $width={104}>
                  <select aria-label="字体"><option /></select>
                  <Caret />
                </Combo>
                <Combo $width={43}>
                  <select aria-label="字号"><option>18+</option></select>
                  <Caret />
                </Combo>
                <ToolButton $width={26} $gap={0} aria-label="增大字号"><Glyph $size={16}>A</Glyph><SizeArrow up /></ToolButton>
                <ToolButton $width={20} $gap={0} aria-label="减小字号"><Glyph $size={12}>A</Glyph><SizeArrow /></ToolButton>
                <Divider />
                <ToolButton aria-label="清除所有格式"><ClearIcon /></ToolButton>
              </ToolRow>
              <ToolRow>
                <ToolButton><Glyph>B</Glyph></ToolButton>
                <ToolButton><Glyph $italic>I</Glyph></ToolButton>
                <ToolButton><Glyph $underline>U</Glyph></ToolButton>
                <ToolButton><Glyph $shadow>S</Glyph></ToolButton>
                <ToolButton><Glyph $strike $size={12}>abc</Glyph></ToolButton>
                <ToolButton $width={30}>
                  <SpacingGlyph>AV<SpacingIcon /></SpacingGlyph>
                  <Caret dim />
                </ToolButton>
                <ToolButton $width={30}><Glyph>Aa</Glyph><Caret dim /></ToolButton>
                <Divider />
                <ToolButton $width={38} $gap={8}><Glyph $size={16}>A</Glyph><Caret dim /></ToolButton>
              </ToolRow>
            </ToolRows>
          </Group>

          <Group label="段落" width={197} left={5} launcher>
            <ToolRows>
              <ToolRow>
                <ToolButton $width={33} $gap={5} aria-label="项目符号"><Bullets /><Caret dim /></ToolButton>
                <ToolButton $width={33} $gap={5} aria-label="编号"><Bullets numbered /><Caret dim /></ToolButton>
                <Divider $height={0} $margin={2} />
                <ToolButton $width={22} aria-label="降低列表级别"><IndentIcon /></ToolButton>
                <ToolButton $width={22} aria-label="提高列表级别"><IndentIcon inward /></ToolButton>
                <ToolButton $width={33} aria-label="行距"><LineSpacingIcon /><Caret dim /></ToolButton>
              </ToolRow>
              <ToolRow>
                <ToolButton aria-label="左对齐"><AlignIcon kind="left" /></ToolButton>
                <ToolButton aria-label="居中"><AlignIcon kind="center" /></ToolButton>
                <ToolButton aria-label="右对齐"><AlignIcon kind="right" /></ToolButton>
                <ToolButton aria-label="两端对齐"><AlignIcon kind="justify" /></ToolButton>
                <ToolButton $width={22} aria-label="分散对齐"><DistributeIcon /></ToolButton>
                <Divider $margin={3} />
                <ToolButton $width={30} $gap={5} aria-label="分栏"><ColumnsIcon /><Caret dim /></ToolButton>
              </ToolRow>
            </ToolRows>
            <Stack $pitch={25}>
              <RowButton aria-label="文字方向"><TextDirectionIcon /><Caret dim /></RowButton>
              <RowButton aria-label="对齐文本"><TextAlignIcon /><Caret dim /></RowButton>
              <RowButton aria-label="转换为 SmartArt"><SmartArtIcon /><Caret dim /></RowButton>
            </Stack>
          </Group>

          <Group label="绘图" width={330} left={6} launcher>
            <Gallery>
              <GalleryGrid>
                {shapes.map((s) => (
                  <button key={s.name} aria-label={s.name}><ShapeIcon>{s.art}</ShapeIcon></button>
                ))}
              </GalleryGrid>
              <GalleryScroll>
                <button aria-label="上一行">
                  <svg width="5" height="3" viewBox="0 0 5 3"><path d="M0 3h5L2.500 0z" fill="currentColor" /></svg>
                </button>
                <button aria-label="下一行"><Caret /></button>
                <button aria-label="其他形状"><CustomizeIcon /></button>
              </GalleryScroll>
            </Gallery>
            <BigButton $width={38}>
              <ArrangeIcon />
              <BigLine>排列</BigLine>
              <BigLine><Caret /></BigLine>
            </BigButton>
            <BigButton $width={56} $dim>
              <QuickStyleIcon />
              <BigLine>快速样式</BigLine>
              <BigLine><Caret dim /></BigLine>
            </BigButton>
            <Stack $pitch={22} $left={2}>
              <RowButton $dim><FillIcon /><span>形状填充</span><Caret dim /></RowButton>
              <RowButton $dim><OutlineIcon /><span>形状轮廓</span><Caret dim /></RowButton>
              <RowButton $dim><EffectIcon /><span>形状效果</span><Caret dim /></RowButton>
            </Stack>
          </Group>

          <Group label="编辑" width={69} left={4}>
            <Stack $pitch={22}>
              <RowButton><FindIcon /><span>查找</span></RowButton>
              <RowButton><ReplaceIcon /><span>替换</span><Caret /></RowButton>
              <RowButton><SelectIcon /><span>选择</span><Caret /></RowButton>
            </Stack>
          </Group>
        </Ribbon>

        <Workspace>
          <SidePanel>
            <PanelTabs>
              <PanelTab $active>幻灯片</PanelTab>
              <PanelTab>大纲</PanelTab>
              <PanelClose aria-label="关闭窗格">
                <svg width="12" height="12" viewBox="0 0 12 12" stroke="currentColor" strokeWidth="2"><path d="M1.500 1.500l9 9M10.500 1.500l-9 9" /></svg>
              </PanelClose>
            </PanelTabs>
            <SlideThumb>
              <ThumbNumber>1</ThumbNumber>
              <ThumbPaper><Venn id="thumb" small /></ThumbPaper>
            </SlideThumb>
          </SidePanel>
          <Splitter />
          <MainColumn>
            <SlidePane>
              <Slide><Venn id="slide" /></Slide>
            </SlidePane>
            <HorizontalSplitter />
            <Notes>
              <NotesInput aria-label="备注" defaultValue="单击此处添加备注" />
              <NotesScroll>
                <button aria-label="向上滚动">
                  <svg width="9" height="5" viewBox="0 0 9 5"><path d="M0 5h9L4.500 0z" fill="currentColor" /></svg>
                </button>
                <button aria-label="向下滚动">
                  <svg width="9" height="5" viewBox="0 0 9 5"><path d="M0 0h9L4.500 5z" fill="currentColor" /></svg>
                </button>
              </NotesScroll>
            </Notes>
          </MainColumn>
        </Workspace>

        <StatusBar>
          <StatusItem $width={148} $left={8}>幻灯片 第 1 张，共 1 张</StatusItem>
          <StatusDivider />
          <StatusItem $width={103} $left={15}>“Office 主题”</StatusItem>
          <StatusDivider />
          <StatusItem $width={30} $left={6} aria-label="拼写检查"><ProofIcon /></StatusItem>
          <StatusItem $width={74} $left={9}>中文(中国)</StatusItem>
          <StatusDivider />
          <StatusRight>
            <StatusDivider />
            {Object.entries(viewIcons).map(([name, art], i) => (
              <ViewButton key={name} $active={i === 0} aria-label={name}>
                <svg width="13" height="12" viewBox="0 0 13 12" fill="none" stroke="currentColor">{art}</svg>
              </ViewButton>
            ))}
            <ZoomValue>65%</ZoomValue>
            <ZoomStep aria-label="缩小"><ZoomGlyph /></ZoomStep>
            <ZoomSlider type="range" min={0} max={100} defaultValue={30} aria-label="缩放" />
            <ZoomStep aria-label="放大"><ZoomGlyph plus /></ZoomStep>
            <FitButton aria-label="使幻灯片适应窗口"><FitIcon /></FitButton>
            <GripIcon />
          </StatusRight>
        </StatusBar>
      </Frame>
    </Window>
  );
}
